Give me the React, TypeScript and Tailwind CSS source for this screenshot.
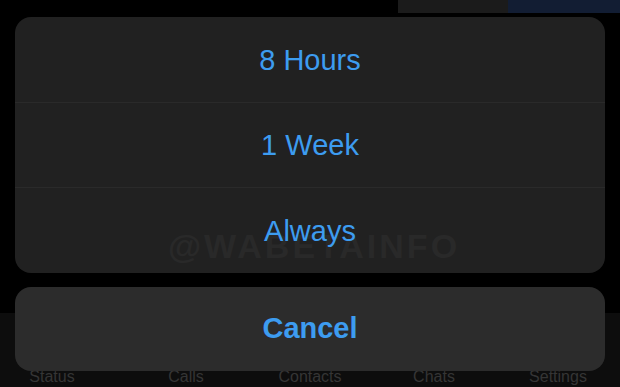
import React from "react";

const font = { fontFamily: '"Liberation Sans", Arial, sans-serif' };

export default function App() {
  const tabs = ["Status", "Calls", "Contacts", "Chats", "Settings"];
  return (
    <div className="relative h-[387px] w-[620px] overflow-hidden bg-black" style={font}>
      {/* background app */}
      <div className="flex h-full flex-col">
        <div className="flex h-[13px]">
          <div className="flex-1" />
          <div className="w-[110px] bg-[#1b1b1b]" />
          <div className="w-[112px] bg-[#121d33]" />
        </div>
        <div className="flex-1" />
        <div className="grid h-[74px] grid-cols-5 items-end bg-[#0d0d0d]">
          {tabs.map((t, i) => (
            <div key={t} className="flex justify-center text-[16px] leading-[20px] text-[#353535]">
              <span className={i === 0 ? "mr-[20px]" : ""}>{t}</span>
            </div>
          ))}
        </div>
      </div>

      {/* action sheet overlay */}
      <div className="absolute inset-x-[15px] top-[17px] flex flex-col gap-[14px]">
        <div className="relative flex h-[256px] flex-col overflow-hidden rounded-[16px] bg-[#212121]">
          <div className="pointer-events-none absolute left-0 right-0 top-[214px] flex justify-center">
            <span className="ml-[8px] text-[34px] font-black leading-[30px] tracking-[3px] text-[#292929]">
              @WABETAINFO
            </span>
          </div>
          {["8 Hours", "1 Week", "Always"].map((t, i) => (
            <div
              key={t}
              className={
                "relative flex flex-1 items-center justify-center pt-[2px] text-[29px] text-[#3d9cf0] " +
                (i > 0 ? "border-t border-[#2a2a2a]" : "")
              }
            >
              {t}
            </div>
          ))}
        </div>
        <div className="flex h-[84px] items-center justify-center rounded-[16px] bg-[#2c2c2c] text-[29px] font-bold text-[#3d9cf0]">
          Cancel
        </div>
      </div>
    </div>
  );
}
